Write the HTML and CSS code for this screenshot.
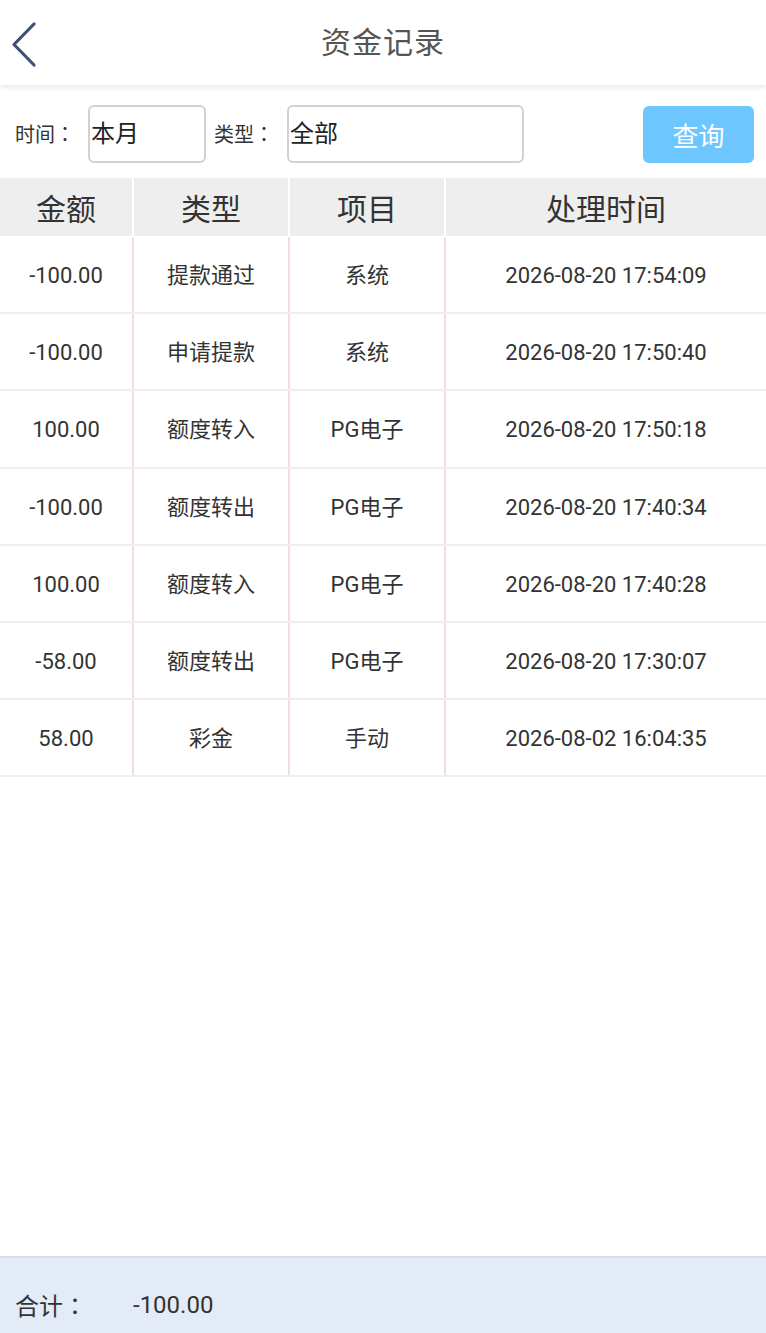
FILE: index.html
```html
<!DOCTYPE html>
<html lang="zh-CN">
<head>
<meta charset="utf-8">
<title>资金记录</title>
<link rel="stylesheet" href="styles.css">
</head>
<body>
<div class="page">
  <header class="topbar">
    <a class="back" href="#" aria-label="返回">
      <svg width="30" height="48" viewBox="0 0 30 48"><polyline points="24,4 4,24.5 24,45" fill="none" stroke="#3f5077" stroke-width="3.2" stroke-linecap="round" stroke-linejoin="round"/></svg>
    </a>
    <h1 class="title">资金记录</h1>
  </header>

  <div class="filters">
    <label class="lbl">时间<span class="colon" lang="zh-TW">：</span></label>
    <div class="field f-time">本月</div>
    <label class="lbl">类型<span class="colon" lang="zh-TW">：</span></label>
    <div class="field f-type">全部</div>
    <button class="btn">查询</button>
  </div>

  <div class="table">
    <div class="row head">
      <div class="cell">金额</div>
      <div class="cell">类型</div>
      <div class="cell">项目</div>
      <div class="cell">处理时间</div>
    </div>
    <div class="row">
      <div class="cell num">-100.00</div><div class="cell zh">提款通过</div><div class="cell zh">系统</div><div class="cell num">2026-08-20 17:54:09</div>
    </div>
    <div class="row">
      <div class="cell num">-100.00</div><div class="cell zh">申请提款</div><div class="cell zh">系统</div><div class="cell num">2026-08-20 17:50:40</div>
    </div>
    <div class="row">
      <div class="cell num">100.00</div><div class="cell zh">额度转入</div><div class="cell zh">PG电子</div><div class="cell num">2026-08-20 17:50:18</div>
    </div>
    <div class="row">
      <div class="cell num">-100.00</div><div class="cell zh">额度转出</div><div class="cell zh">PG电子</div><div class="cell num">2026-08-20 17:40:34</div>
    </div>
    <div class="row">
      <div class="cell num">100.00</div><div class="cell zh">额度转入</div><div class="cell zh">PG电子</div><div class="cell num">2026-08-20 17:40:28</div>
    </div>
    <div class="row">
      <div class="cell num">-58.00</div><div class="cell zh">额度转出</div><div class="cell zh">PG电子</div><div class="cell num">2026-08-20 17:30:07</div>
    </div>
    <div class="row">
      <div class="cell num">58.00</div><div class="cell zh">彩金</div><div class="cell zh">手动</div><div class="cell num">2026-08-02 16:04:35</div>
    </div>
  </div>

  <footer class="total">
    <span class="t-lbl">合计<span class="colon" lang="zh-TW">：</span></span>
    <span class="t-val">-100.00</span>
  </footer>
</div>
</body>
</html>
```

FILE: styles.css
```css
* { box-sizing: border-box; }
html, body { margin: 0; padding: 0; }
body {
  font-family: Roboto, "Noto Sans CJK SC", sans-serif;
  color: #333;
  background: #fff;
}
.page {
  min-height: 100vh;
  display: flex;
  flex-direction: column;
}
.topbar {
  height: 85px;
  display: flex;
  align-items: center;
  justify-content: center;
  position: relative;
  background: #fff;
  box-shadow: 0 2px 6px rgba(0,0,0,0.10);
  z-index: 1;
  padding-bottom: 6px;
}
.back {
  position: absolute;
  left: 10px;
  top: 20px;
  width: 30px;
  height: 48px;
  display: block;
}
.back svg { display: block; }
.title {
  margin: 0;
  font-weight: normal;
  font-size: 30px;
  color: #555;
  letter-spacing: 1px;
}
.filters {
  display: flex;
  align-items: center;
  height: 58px;
  margin-top: 20px;
  padding-left: 15px;
  padding-right: 12px;
}
.lbl {
  font-family: "Noto Sans CJK SC", sans-serif;
  font-size: 20px;
  color: #333;
  width: 73px;
  padding-bottom: 2px;
}
.colon {
  font-family: "Noto Sans CJK TC", sans-serif;
}
.field {
  height: 58px;
  border: 2px solid #d2d2d2;
  border-radius: 6px;
  font-size: 24px;
  line-height: 54px;
  padding-left: 1px;
  color: #222;
}
.f-time { width: 118px; margin-right: 8px; }
.f-type { width: 237px; }
.btn {
  margin-left: auto;
  width: 111px;
  height: 57px;
  border: none;
  border-radius: 6px;
  background: #6dc6fe;
  color: #fff;
  font-family: "Noto Sans CJK SC", sans-serif;
  font-size: 26px;
  padding: 0;
}
.table {
  margin-top: 15px;
}
.row {
  display: grid;
  grid-template-columns: 132px 154px 154px 1fr;
  column-gap: 2px;
  background: #f3dcdc;
  border-bottom: 2px solid #efefef;
  height: 77.2px;
}
.row .cell {
  background: #fff;
  display: flex;
  align-items: center;
  justify-content: center;
  font-size: 22px;
  color: #333;
}
.row .cell.num { padding-top: 2px; }
.row .cell.zh { padding-bottom: 3px; }
.row.head {
  background: #fff;
  height: 59px;
  border-bottom: 1px solid #fff;
}
.row.head .cell {
  background: #eee;
  font-size: 30px;
  color: #333;
}
.total {
  margin-top: auto;
  height: 77px;
  background: #e3ebf6;
  border-top: 2px solid #dcdfe4;
  display: flex;
  align-items: center;
  padding-left: 15px;
  padding-top: 18px;
  font-size: 24px;
  color: #333;
}
.t-lbl { width: 118px; font-family: "Noto Sans CJK SC", sans-serif; }
```
